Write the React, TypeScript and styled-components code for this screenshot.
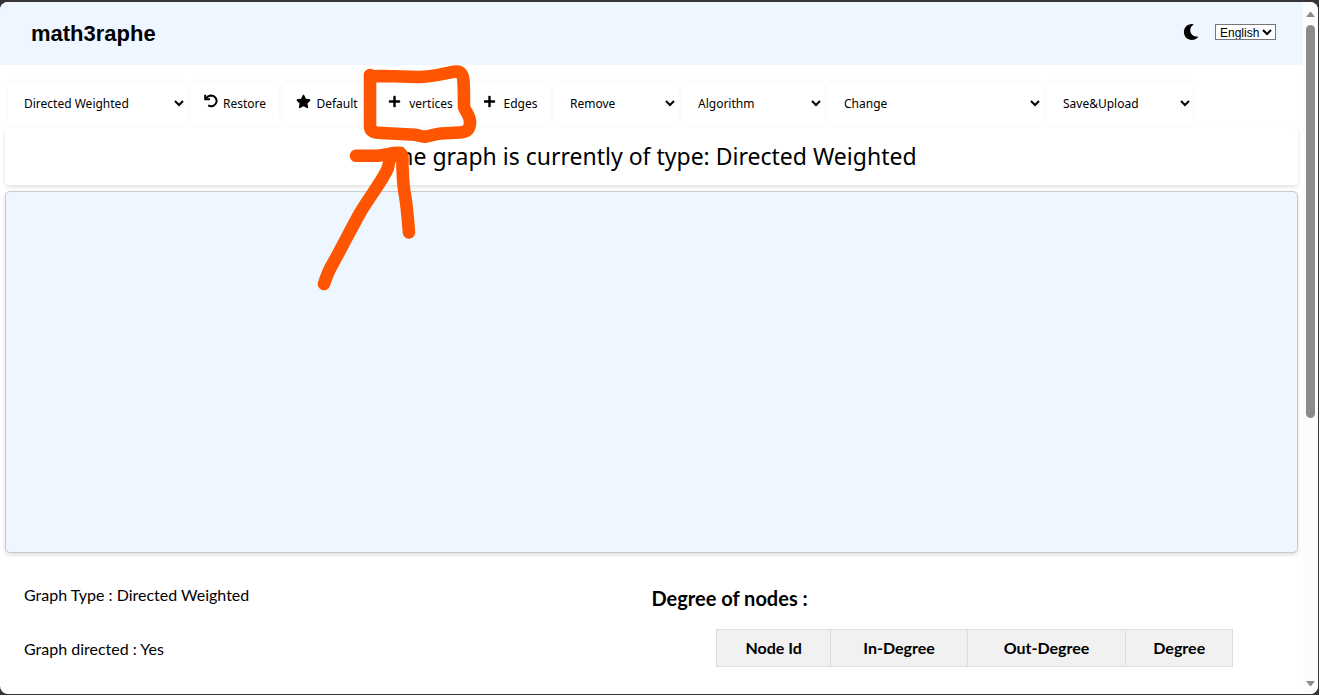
import React from "react";
import styled, { createGlobalStyle } from "styled-components";
import { FaMoon, FaStar, FaPlus } from "react-icons/fa";

const GlobalStyle = createGlobalStyle`
  * { box-sizing: border-box; }
  body {
    margin: 0;
    background: #363435;
    color: #000;
    font-family: Lato, "Liberation Sans", sans-serif;
  }
`;

const Frame = styled.div`
  display: flex;
  height: calc(100vh - 3px);
  margin: 2px 1px 1px 0;
  border-radius: 8px;
  overflow: hidden;
  background: #fff;
`;

const Page = styled.div`
  flex: 1;
  min-width: 0;
  overflow: hidden;
`;

const Header = styled.header`
  display: flex;
  align-items: center;
  justify-content: space-between;
  height: 63px;
  padding: 0 27px 0 31px;
  background: #eef6ff;
`;

const Brand = styled.h1`
  margin: 0;
  font: bold 22px/26px "Liberation Sans", sans-serif;
`;

const HeaderTools = styled.div`
  display: flex;
  align-items: center;
  gap: 16px;
  padding-bottom: 4px;
`;

const ThemeButton = styled.button`
  display: flex;
  padding: 0;
  border: 0;
  background: none;
  color: #000;
  font-size: 16px;
`;

const LanguageSelect = styled.select`
  width: 61px;
  height: 16px;
  padding: 0;
  border: 1px solid #767676;
  border-radius: 0;
  background: #fff;
  color: #000;
  font: 12px "Liberation Sans", sans-serif;
`;

const Toolbar = styled.nav`
  display: flex;
  flex-wrap: wrap;
  gap: 4px;
  padding: 17px 8px 4px;
`;

const toolStyle = `
  height: 42px;
  border: 0;
  border-radius: 4px;
  background: #fff;
  color: #000;
  box-shadow: 0 0 4px rgba(0, 0, 0, 0.04);
  font: 12px "Noto Sans", sans-serif;
`;

const ToolSelect = styled.select<{ $width: number }>`
  ${toolStyle}
  width: ${(p) => p.$width}px;
  padding: 0 0 0 12px;
`;

const ToolButton = styled.button<{ $width: number; $gap?: number }>`
  ${toolStyle}
  display: flex;
  align-items: center;
  justify-content: center;
  gap: ${(p) => p.$gap ?? 5}px;
  width: ${(p) => p.$width}px;
  padding: 0;

  svg {
    flex: none;
    margin-bottom: 4px;
  }
`;

const Main = styled.main`
  padding: 0 5px;
`;

const Notice = styled.p`
  margin: 0 0 6px;
  padding: 12px 0 13px;
  border-radius: 4px;
  box-shadow: 0 2px 4px rgba(0, 0, 0, 0.12);
  font: 23px/32px "Noto Sans", sans-serif;
  text-align: center;
`;

const GraphCanvas = styled.section`
  height: 362px;
  border: 1px solid #c5c9d0;
  border-radius: 5px;
  background: #eef6ff;
  box-shadow: 0 2px 4px rgba(0, 0, 0, 0.12);
`;

const Details = styled.div`
  display: grid;
  grid-template-columns: 1fr 1fr;
  padding-top: 32px;
`;

const Facts = styled.div`
  display: flex;
  flex-direction: column;
  gap: 34px;
  padding-left: 19px;
`;

const Fact = styled.p`
  margin: 0;
  font-size: 16px;
  line-height: 20px;
`;

const DegreeTitle = styled.h2`
  margin: 0 0 18px;
  font-size: 20px;
  line-height: 26px;
`;

const DegreeTable = styled.table`
  width: 80%;
  margin: 0 auto;
  border-collapse: collapse;
`;

const HeadCell = styled.th`
  height: 37px;
  padding: 0 9px;
  border: 1px solid #ddd;
  background: #f1f1f1;
  font-size: 16px;
  line-height: 20px;
`;

const ScrollRail = styled.div`
  display: flex;
  flex: none;
  flex-direction: column;
  align-items: center;
  justify-content: space-between;
  width: 15px;
  padding: 10px 0 8px;
  background: #fcfcfc;
`;

const ScrollTrack = styled.div`
  flex: 1;
  margin: 8px 0 12px;
`;

const ScrollThumb = styled.div`
  width: 9px;
  height: 61%;
  border-radius: 5px;
  background: #8b8b8b;
`;

const Scribble = styled.svg`
  position: absolute;
  top: 60px;
  left: 310px;
  pointer-events: none;
`;

const RestoreIcon = () => (
  <svg width="14" height="14" viewBox="0 0 14 14" fill="none" stroke="#000" strokeWidth="2" aria-hidden="true">
    <path d="M1.2 0.8V5.3H6" />
    <path d="M1.8 4.8C3.2 2.4 5 1.5 7.4 1.5A5.4 5.4 0 1 1 4.2 11.4" />
  </svg>
);

const columns = ["Node Id", "In-Degree", "Out-Degree", "Degree"];

export default function App() {
  return (
    <>
      <GlobalStyle />
      <Frame>
        <Page>
          <Header>
            <Brand>math3raphe</Brand>
            <HeaderTools>
              <ThemeButton type="button" aria-label="Dark mode">
                <FaMoon />
              </ThemeButton>
              <LanguageSelect aria-label="Language">
                <option>English</option>
              </LanguageSelect>
            </HeaderTools>
          </Header>
          <Toolbar aria-label="Graph tools">
            <ToolSelect $width={179} aria-label="Graph type">
              <option>Directed Weighted</option>
            </ToolSelect>
            <ToolButton type="button" $width={88}>
              <RestoreIcon />
              Restore
            </ToolButton>
            <ToolButton type="button" $width={88}>
              <FaStar size={15} />
              Default
            </ToolButton>
            <ToolButton type="button" $width={91} $gap={8}>
              <FaPlus size={13} />
              vertices
            </ToolButton>
            <ToolButton type="button" $width={80} $gap={8}>
              <FaPlus size={13} />
              Edges
            </ToolButton>
            <ToolSelect $width={124} aria-label="Remove">
              <option>Remove</option>
            </ToolSelect>
            <ToolSelect $width={142} aria-label="Algorithm">
              <option>Algorithm</option>
            </ToolSelect>
            <ToolSelect $width={215} aria-label="Change">
              <option>Change</option>
            </ToolSelect>
            <ToolSelect $width={146} aria-label="Save and upload">
              <option>Save&amp;Upload</option>
            </ToolSelect>
          </Toolbar>
          <Main>
            <Notice>The graph is currently of type: Directed Weighted</Notice>
            <GraphCanvas aria-label="Graph canvas" />
            <Details>
              <Facts>
                <Fact>Graph Type : Directed Weighted</Fact>
                <Fact>Graph directed : Yes</Fact>
              </Facts>
              <section>
                <DegreeTitle>Degree of nodes :</DegreeTitle>
                <DegreeTable>
                  <thead>
                    <tr>
                      {columns.map((label) => (
                        <HeadCell key={label} scope="col">
                          {label}
                        </HeadCell>
                      ))}
                    </tr>
                  </thead>
                </DegreeTable>
              </section>
            </Details>
          </Main>
        </Page>
        <ScrollRail aria-hidden="true">
          <svg width="9" height="5" viewBox="0 0 9 5" fill="#8b8b8b">
            <path d="M0 5L4 0H5L9 5Z" />
          </svg>
          <ScrollTrack>
            <ScrollThumb />
          </ScrollTrack>
          <svg width="9" height="5" viewBox="0 0 9 5" fill="#8b8b8b">
            <path d="M0 0L4 5H5L9 0Z" />
          </svg>
        </ScrollRail>
      </Frame>
      <Scribble
        width="172"
        height="236"
        viewBox="310 60 172 236"
        fill="none"
        stroke="#ff5500"
        strokeWidth="12.6"
        strokeLinecap="round"
        strokeLinejoin="round"
        aria-hidden="true"
      >
        <path d="M370 75C371 77 375 76 384 76L419 77C433 77 445 73 456 71.500C461 71 463 75 463.500 81C464 90 464 98 464 107C466 113 471 116 470 124C469 130 467 132 460 132.500L441 133.500C434 134 431 136 425 136.700C419 136 416 134 410 134.500L382 133C374 133 370 131 370 126Z" />
        <path d="M356 155.700H378C386 155 395 152 400 153C404 155 402 162 402.500 167C403 179 403 186 405 195C407 207 408 220 409 232.500" />
        <path d="M394 156C386 160 391 165 386 172C378 187 368 199 360 213C351 229 340 251 332 265C328 272 326 278 324 284" />
      </Scribble>
    </>
  );
}
